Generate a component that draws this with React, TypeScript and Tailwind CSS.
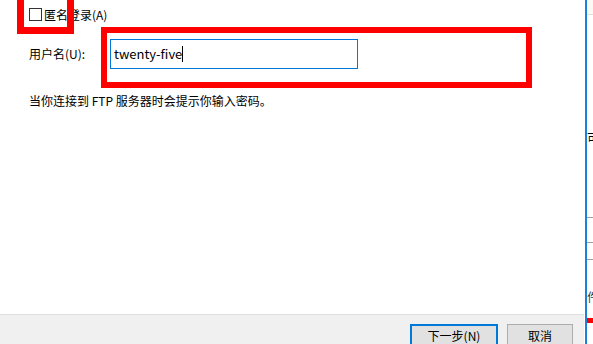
const font = { fontFamily: '"Noto Sans CJK SC", "Noto Sans", sans-serif' };

function Checkbox() {
  return <span className="block w-[13px] h-[13px] border border-[#333333] bg-white shrink-0" />;
}

export default function App() {
  return (
    <div
      className="relative flex w-[593px] h-[344px] overflow-hidden bg-white text-[12px] text-[#000000]"
      style={font}
    >
      <div className="flex flex-col w-[584px] shrink-0">
        <div className="flex-1 bg-white pl-[29px]">
          <div className="flex items-center h-[29px] gap-[2px]">
            <Checkbox />
            <span className="leading-[16px]">匿名登录(A)</span>
          </div>

          <div className="flex items-center mt-[10px] h-[30px]">
            <span className="w-[81px] leading-[16px]">用户名(U):</span>
            <div className="flex items-center w-[248px] h-[30px] border border-[#0078d7] pl-[3px]">
              <span className="text-[13px] leading-[16px]">twenty-five</span>
              <span className="block w-[1px] h-[16px] bg-black" />
            </div>
          </div>

          <p className="mt-[23px] leading-[18px]">当你连接到 FTP 服务器时会提示你输入密码。</p>
        </div>

        <div className="flex justify-end h-[30px] bg-[#f0f0f0] border-t border-[#dfdfdf] pt-[9px] pr-[11px] gap-[9px]">
          <button className="w-[88px] h-[23px] border-2 border-[#0078d7] bg-[#e1e1e1] text-[12px] leading-[18px]">
            下一步(N)
          </button>
          <button className="w-[66px] h-[23px] border border-[#adadad] bg-[#e1e1e1] text-[12px] leading-[20px]">
            取消
          </button>
        </div>
      </div>

      <div className="w-[1px] bg-white shrink-0" />
      <div className="w-[2px] bg-[#1883d7] shrink-0" />

      <div className="flex flex-col w-[6px] shrink-0 overflow-hidden">
        <div className="h-[15px] bg-[#fbf9f4] border-b border-[#e0e0e0]" />
        <div className="mt-[115px] h-[16px] leading-[16px] whitespace-nowrap">可</div>
        <div className="mt-[71px] h-[1px] bg-[#a0a0a0]" />
        <div className="mt-[24px] h-[1px] bg-[#a0a0a0]" />
        <div className="mt-[16px] h-[1px] bg-[#a0a0a0]" />
        <div className="mt-[30px] h-[14px] leading-[14px] whitespace-nowrap text-[#333333]">件</div>
        <div className="mt-[14px] h-[5px] bg-[#ff0000]" />
      </div>

      <div className="absolute left-[17px] top-[-10px] w-[57px] h-[44px] border-[7px] border-[#ff0000]" />
      <div className="absolute left-[101px] top-[27px] w-[431px] h-[61px] border-[6px] border-[#ff0000]" />
    </div>
  );
}
